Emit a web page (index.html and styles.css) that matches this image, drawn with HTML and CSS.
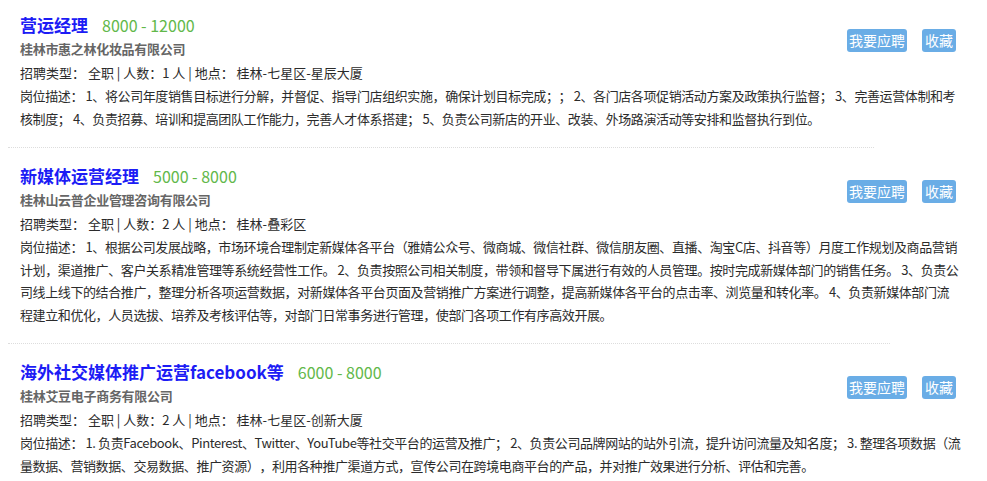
FILE: index.html
```html
<!DOCTYPE html>
<html lang="zh-CN">
<head>
<meta charset="utf-8">
<title>职位列表</title>
<link rel="stylesheet" href="styles.css">
</head>
<body>
<div class="list">
  <div class="item item-first">
    <div class="actions">
      <a class="btn" href="#">我要应聘</a>
      <a class="btn btn-short" href="#">收藏</a>
    </div>
    <div class="title-row"><a class="title" href="#">营运经理</a><span class="salary">8000 - 12000</span></div>
    <div class="company">桂林市惠之林化妆品有限公司</div>
    <div class="meta">招聘类型： 全职 | 人数：1 人 | 地点： 桂林-七星区-星辰大厦</div>
    <div class="desc">岗位描述： 1、将公司年度销售目标进行分解，并督促、指导门店组织实施，确保计划目标完成；； 2、各门店各项促销活动方案及政策执行监督； 3、完善运营体制和考核制度； 4、负责招募、培训和提高团队工作能力，完善人才体系搭建； 5、负责公司新店的开业、改装、外场路演活动等安排和监督执行到位。</div>
  </div>
  <div class="sep"></div>
  <div class="item">
    <div class="actions">
      <a class="btn" href="#">我要应聘</a>
      <a class="btn btn-short" href="#">收藏</a>
    </div>
    <div class="title-row"><a class="title" href="#">新媒体运营经理</a><span class="salary">5000 - 8000</span></div>
    <div class="company">桂林山云普企业管理咨询有限公司</div>
    <div class="meta">招聘类型： 全职 | 人数：2 人 | 地点： 桂林-叠彩区</div>
    <div class="desc">岗位描述： 1、根据公司发展战略，市场环境合理制定新媒体各平台（雅婧公众号、微商城、微信社群、微信朋友圈、直播、淘宝C店、抖音等）月度工作规划及商品营销计划，渠道推广、客户关系精准管理等系统经营性工作。 2、负责按照公司相关制度，带领和督导下属进行有效的人员管理。按时完成新媒体部门的销售任务。 3、负责公司线上线下的结合推广，整理分析各项运营数据，对新媒体各平台页面及营销推广方案进行调整，提高新媒体各平台的点击率、浏览量和转化率。 4、负责新媒体部门流程建立和优化，人员选拔、培养及考核评估等，对部门日常事务进行管理，使部门各项工作有序高效开展。</div>
  </div>
  <div class="sep sep-wide"></div>
  <div class="item">
    <div class="actions">
      <a class="btn" href="#">我要应聘</a>
      <a class="btn btn-short" href="#">收藏</a>
    </div>
    <div class="title-row"><a class="title" href="#">海外社交媒体推广运营facebook等</a><span class="salary">6000 - 8000</span></div>
    <div class="company">桂林艾豆电子商务有限公司</div>
    <div class="meta">招聘类型： 全职 | 人数：2 人 | 地点： 桂林-七星区-创新大厦</div>
    <div class="desc">岗位描述： 1. 负责Facebook、Pinterest、Twitter、YouTube等社交平台的运营及推广； 2、负责公司品牌网站的站外引流，提升访问流量及知名度； 3. 整理各项数据（流量数据、营销数据、交易数据、推广资源），利用各种推广渠道方式，宣传公司在跨境电商平台的产品，并对推广效果进行分析、评估和完善。</div>
  </div>
</div>
</body>
</html>
```
FILE: styles.css
```css
html, body {
  margin: 0;
  padding: 0;
  background: #ffffff;
}
body {
  font-family: "Noto Sans CJK SC", "Noto Sans", sans-serif;
  font-size: 13px;
  color: #2b2b2b;
  text-spacing-trim: space-all;
}
.list {
  width: 987px;
}
.item {
  padding: 15px 25.5px 17px 20px;
}
.item-first {
  padding-top: 12px;
}
.actions {
  float: right;
  margin-top: 17px;
  margin-right: 5.5px;
  display: flex;
  gap: 15px;
}
.btn {
  display: block;
  height: 23px;
  line-height: 23px;
  padding: 0 2px;
  font-size: 14px;
  color: #ffffff;
  background: #6aade6;
  border-radius: 3px;
  text-decoration: none;
}
.btn-short {
  padding: 0 3px;
}
.title-row {
  height: 26px;
  line-height: 26px;
  white-space: nowrap;
}
.title {
  font-size: 17px;
  font-weight: bold;
  color: #1c1cf5;
  text-decoration: none;
}
.salary {
  margin-left: 14px;
  font-size: 16px;
  color: #62b84a;
}
.company {
  line-height: 22px;
  font-weight: bold;
  color: #666666;
  letter-spacing: -0.3px;
}
.meta {
  line-height: 25px;
}
.desc {
  line-height: 22.5px;
  letter-spacing: -0.4px;
}
.sep {
  margin-left: 8px;
  width: 866px;
  height: 0;
  border-top: 1px dotted #dddddd;
}
.sep-wide {
  width: 882px;
}
```
